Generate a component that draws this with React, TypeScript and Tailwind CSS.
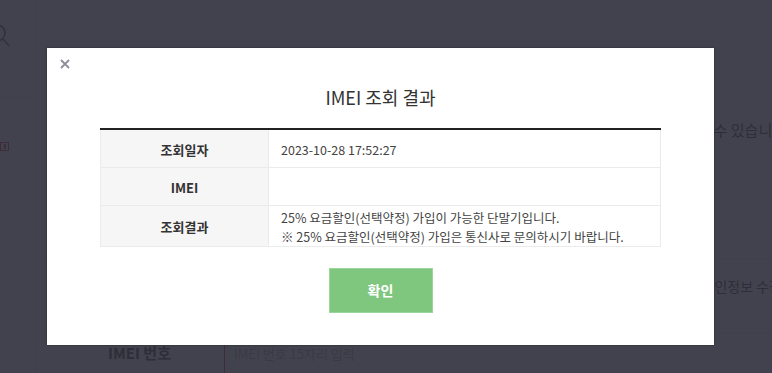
import React from "react";

const rows: { label: string; value: React.ReactNode }[] = [
  { label: "조회일자", value: "2023-10-28 17:52:27" },
  { label: "IMEI", value: "" },
  {
    label: "조회결과",
    value: (
      <>
        25% 요금할인(선택약정) 가입이 가능한 단말기입니다.
        <br />※ 25% 요금할인(선택약정) 가입은 통신사로 문의하시기 바랍니다.
      </>
    ),
  },
];

function BackgroundPage() {
  return (
    <div className="flex h-[373px] w-[772px] bg-white text-[#333]">
      <div className="flex w-[37px] flex-col border-r border-[#e6e6e6]">
        <div className="flex h-[98px] items-center border-b border-[#e6e6e6]">
          <svg width="22" height="28" viewBox="0 0 22 28" className="-ml-[12px] -mt-[24px]">
            <circle cx="9" cy="10" r="8" fill="none" stroke="#555" strokeWidth="1.6" />
            <line x1="15" y1="16" x2="21" y2="23" stroke="#555" strokeWidth="1.6" />
          </svg>
        </div>
        <div className="mt-[44px] flex h-[9px] w-[9px] items-center justify-center border border-[#e03030]">
          <div className="h-[5px] w-[2px] bg-[#e03030]" />
        </div>
      </div>
      <div className="flex flex-1 flex-col">
        <div className="h-[121px]" />
        <div className="flex h-[26px] justify-end text-[15px]">
          <span className="-mr-[14px]">수 있습니다</span>
        </div>
        <div className="h-[117px] border-b border-[#e6e6e6]" />
        <div className="flex h-[56px] items-center justify-end text-[14px]">
          <span className="-mr-[10px]">인정보 수집</span>
        </div>
        <div className="h-[20px] border-b border-[#e6e6e6]" />
        <div className="flex h-[40px]">
          <div className="flex w-[187px] items-center justify-center bg-[#f7f7f7] pl-[18px] text-[15px] font-bold">IMEI 번호</div>
          <div className="flex flex-1 items-center border-l border-[#e03030] pl-[9px] text-[13px] text-[#aaa]">
            IMEI 번호 15자리 입력
          </div>
        </div>
      </div>
    </div>
  );
}

export default function App() {
  return (
    <div
      className="relative h-[373px] w-[772px] overflow-hidden"
      style={{ fontFamily: '"Noto Sans CJK KR", "Noto Sans", sans-serif' }}
    >
      <BackgroundPage />
      <div className="absolute inset-0 bg-[#2c2e3a]/90" />
      <div className="absolute left-[47px] top-[48px] w-[667px] bg-white px-[53px] pb-[32px] pt-[34px] shadow-[0_0_2px_rgba(0,0,0,0.4)]">
        <button className="absolute left-[11px] top-[9px] flex h-[14px] w-[14px] items-center justify-center">
          <svg width="10" height="10" viewBox="0 0 10 10">
            <path d="M1 1 L9 9 M9 1 L1 9" stroke="#8a8f99" strokeWidth="1.8" />
          </svg>
        </button>
        <h2 className="text-center text-[18px] font-normal leading-[30px] text-[#333]">IMEI 조회 결과</h2>
        <table className="mt-[16px] w-full border-collapse border-t-2 border-[#222] text-[12.5px] text-[#444]">
          <tbody>
            {rows.map((r) => (
              <tr key={r.label} className="border-b border-[#ebebeb]">
                <th className="h-[38px] w-[168px] border-l border-[#ebebeb] bg-[#f6f6f6] pt-[3px] text-center text-[13px] font-bold text-[#333]">
                  {r.label}
                </th>
                <td className="h-[38px] border-l border-r border-[#ebebeb] pl-[12px] pt-[2px] leading-[19px]">{r.value}</td>
              </tr>
            ))}
          </tbody>
        </table>
        <div className="mt-[21px] flex justify-center">
          <button className="h-[45px] w-[104px] border border-[#9cd59c] bg-[#7fc77f] text-[14px] font-bold text-white">확인</button>
        </div>
      </div>
    </div>
  );
}
